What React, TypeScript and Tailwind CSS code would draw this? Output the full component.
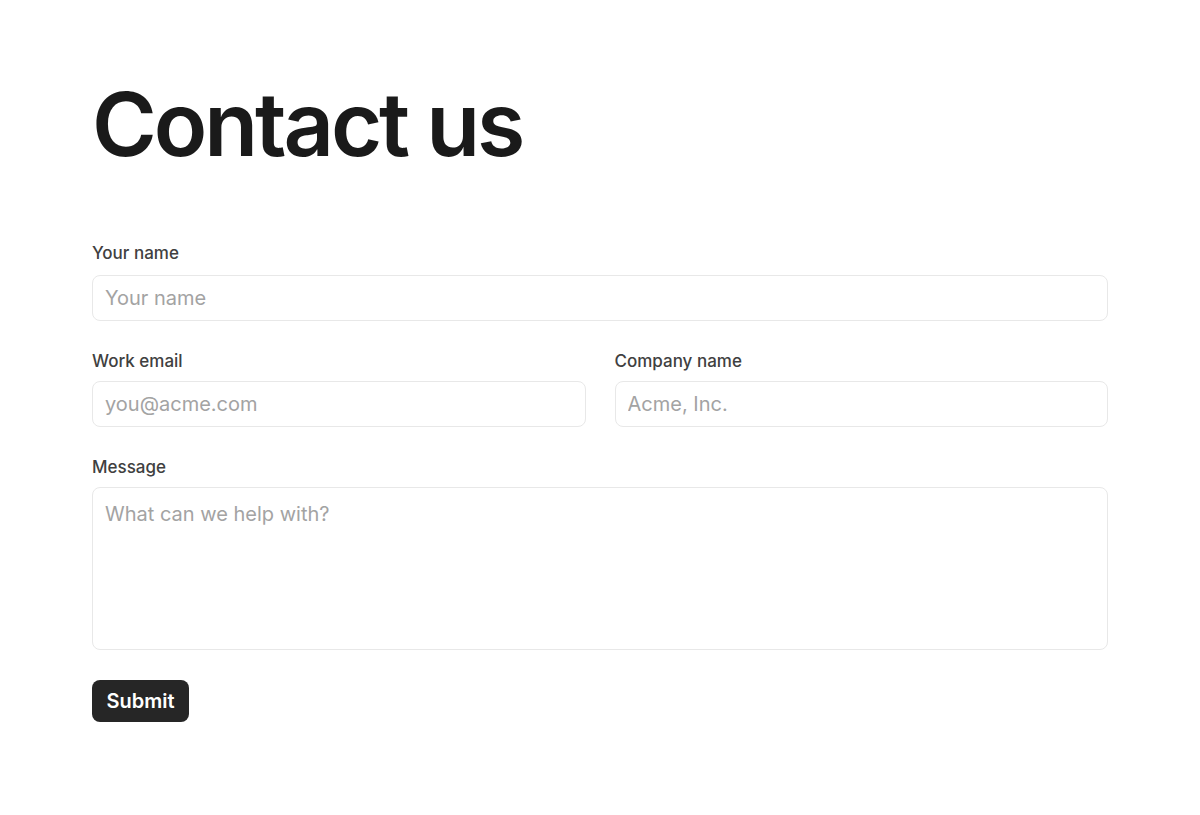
export default function App() {
  const label = "block text-[17px] leading-6 font-medium text-[#404040]";
  const field =
    "w-full rounded-lg border border-[#e8e8e8] bg-white px-3 text-[20px] text-[#1a1a1a] placeholder:text-[#a3a3a3] outline-none";

  return (
    <div className="min-h-[815px] bg-white font-['Inter',sans-serif]">
      <div className="mx-auto w-[1016px] pt-[80px]">
        <h1 className="text-[88px] font-semibold leading-none tracking-[-0.035em] text-[#1a1a1a]">
          Contact us
        </h1>

        <form className="mt-[73px] flex flex-col" onSubmit={(e) => e.preventDefault()}>
          <div className="flex flex-col gap-2.5">
            <label className={label}>Your name</label>
            <input className={`${field} h-[46px]`} placeholder="Your name" />
          </div>

          <div className="mt-7 grid grid-cols-2 gap-[29px]">
            <div className="flex flex-col gap-2">
              <label className={label}>Work email</label>
              <input className={`${field} h-[46px]`} placeholder="you@acme.com" />
            </div>
            <div className="flex flex-col gap-2">
              <label className={label}>Company name</label>
              <input className={`${field} h-[46px]`} placeholder="Acme, Inc." />
            </div>
          </div>

          <div className="mt-7 flex flex-col gap-2">
            <label className={label}>Message</label>
            <textarea
              className={`${field} h-[163px] resize-none py-[12px] leading-7`}
              placeholder="What can we help with?"
            />
          </div>

          <div className="mt-[30px]">
            <button
              type="submit"
              className="h-[42px] w-[97px] rounded-lg bg-[#262626] text-[20px] font-semibold text-white"
            >
              Submit
            </button>
          </div>
        </form>
      </div>
    </div>
  );
}
